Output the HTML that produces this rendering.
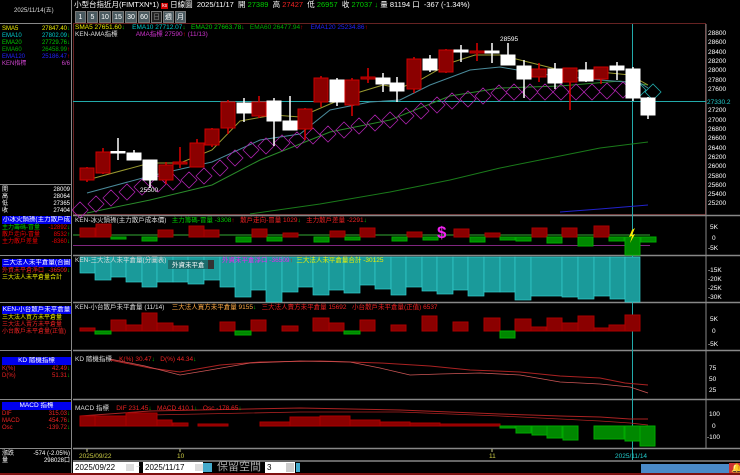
<!DOCTYPE html>
<html><head><meta charset="utf-8"><style>
*{margin:0;padding:0;box-sizing:border-box}
body{width:740px;height:475px;background:#000;overflow:hidden;position:relative;font-family:"Liberation Sans","Noto Sans CJK TC",sans-serif;font-size:7px;color:#fff}
.a{position:absolute;white-space:nowrap;line-height:8px}
.hb{position:absolute;left:2px;width:69px;height:8px;background:#0000ee;color:#fff;font-size:6.5px;line-height:8px;text-align:center;overflow:hidden}
.btn{position:absolute;top:11px;width:11px;height:12px;background:#4a5a60;color:#fff;font-size:7px;line-height:12px;text-align:center;border:1px solid #777}
.r{fill:#8b0000;stroke:#c00;stroke-width:1}
.w{fill:#fff;stroke:#fff}
.rv{fill:#fff;font-size:6.5px}
</style></head><body>
<!-- left panel -->
<div style="position:absolute;left:0;top:0;width:72px;height:475px;border-right:1px solid #888"></div>
<div style="position:absolute;left:0;top:23px;width:72px;height:1px;background:#888"></div>
<div class="a" style="left:14px;top:7px;font-size:6px;color:#ddd">2025/11/14(五)</div>
<div class="a" style="left:2px;top:25px;color:#ee0;font-size:6px">SMA5</div><div class="a" style="left:30px;top:25px;width:40px;text-align:right;color:#ee0;font-size:6px">27847.40<span style="color:#0c0">↓</span></div>
<div class="a" style="left:2px;top:32px;color:#0cc;font-size:6px">EMA10</div><div class="a" style="left:30px;top:32px;width:40px;text-align:right;color:#0cc;font-size:6px">27802.09<span style="color:#0c0">↓</span></div>
<div class="a" style="left:2px;top:39px;color:#0c0;font-size:6px">EMA20</div><div class="a" style="left:30px;top:39px;width:40px;text-align:right;color:#0c0;font-size:6px">27729.76<span style="color:#0c0">↓</span></div>
<div class="a" style="left:2px;top:46px;color:#0a0;font-size:6px">EMA60</div><div class="a" style="left:30px;top:46px;width:40px;text-align:right;color:#0a0;font-size:6px">26458.99<span style="color:#e00">↑</span></div>
<div class="a" style="left:2px;top:53px;color:#22f;font-size:6px">EMA120</div><div class="a" style="left:30px;top:53px;width:40px;text-align:right;color:#22f;font-size:6px">25186.47<span style="color:#e00">↑</span></div>
<div class="a" style="left:2px;top:60px;color:#c4c;font-size:6px">KEN指標</div><div class="a" style="left:30px;top:60px;width:40px;text-align:right;color:#c4c;font-size:6px">6/6</div>
<div style="position:absolute;left:0;top:184px;width:72px;height:1px;background:#888"></div>
<div class="a" style="left:2px;top:186px;font-size:6px">開</div><div class="a" style="left:40px;top:186px;width:30px;text-align:right;font-size:6px">28009</div>
<div class="a" style="left:2px;top:193px;font-size:6px">高</div><div class="a" style="left:40px;top:193px;width:30px;text-align:right;font-size:6px">28064</div>
<div class="a" style="left:2px;top:200px;font-size:6px">低</div><div class="a" style="left:40px;top:200px;width:30px;text-align:right;font-size:6px">27365</div>
<div class="a" style="left:2px;top:207px;font-size:6px">收</div><div class="a" style="left:40px;top:207px;width:30px;text-align:right;font-size:6px">27404</div>

<div class="hb" style="top:216px">小冰火鍋操(主力散戶成本</div>
<div class="a" style="left:2px;top:224px;color:#0c0;font-size:6px">主力籌碼-冒量</div><div class="a" style="left:40px;top:224px;width:30px;text-align:right;color:#e00;font-size:6px">-12892<span style="color:#0c0">↓</span></div>
<div class="a" style="left:2px;top:231px;color:#e00;font-size:6px">散戶走向-冒量</div><div class="a" style="left:40px;top:231px;width:30px;text-align:right;color:#e00;font-size:6px">8532<span style="color:#0c0">↑</span></div>
<div class="a" style="left:2px;top:238px;color:#e00;font-size:6px">主力散戶差量</div><div class="a" style="left:40px;top:238px;width:30px;text-align:right;color:#e00;font-size:6px">-8360<span style="color:#0c0">↓</span></div>
<div style="position:absolute;left:0;top:255px;width:72px;height:1px;background:#888"></div>
<div class="hb" style="top:259px">三大法人未平倉量(合圖表</div>
<div class="a" style="left:2px;top:267px;color:#e22;font-size:6px">外資未平倉淨口</div><div class="a" style="left:40px;top:267px;width:30px;text-align:right;color:#e22;font-size:6px">-36509<span style="color:#0c0">↓</span></div>
<div class="a" style="left:2px;top:274px;color:#ee0;font-size:6px">三大法人未平倉量合計</div>
<div style="position:absolute;left:0;top:302px;width:72px;height:1px;background:#888"></div>
<div class="hb" style="top:306px">KEN-小台散戶未平倉量</div>
<div class="a" style="left:2px;top:314px;color:#ee0;font-size:6px">三大法人買方未平倉量</div>
<div class="a" style="left:2px;top:321px;color:#e22;font-size:6px">三大法人賣方未平倉量</div>
<div class="a" style="left:2px;top:328px;color:#e22;font-size:6px">小台散戶未平倉量(正值)</div>
<div style="position:absolute;left:0;top:350px;width:72px;height:1px;background:#888"></div>
<div class="hb" style="top:357px">KD 隨機指標</div>
<div class="a" style="left:2px;top:365px;color:#e22;font-size:6px">K(%)</div><div class="a" style="left:40px;top:365px;width:30px;text-align:right;color:#e22;font-size:6px">42.49<span style="color:#0c0">↓</span></div>
<div class="a" style="left:2px;top:372px;color:#e22;font-size:6px">D(%)</div><div class="a" style="left:40px;top:372px;width:30px;text-align:right;color:#e22;font-size:6px">51.31<span style="color:#0c0">↓</span></div>
<div style="position:absolute;left:0;top:399px;width:72px;height:1px;background:#888"></div>
<div class="hb" style="top:402px">MACD 指標</div>
<div class="a" style="left:2px;top:410px;color:#e22;font-size:6px">DIF</div><div class="a" style="left:40px;top:410px;width:30px;text-align:right;color:#e22;font-size:6px">315.03<span style="color:#0c0">↓</span></div>
<div class="a" style="left:2px;top:417px;color:#e22;font-size:6px">MACD</div><div class="a" style="left:40px;top:417px;width:30px;text-align:right;color:#e22;font-size:6px">454.76<span style="color:#0c0">↓</span></div>
<div class="a" style="left:2px;top:424px;color:#e22;font-size:6px">Osc</div><div class="a" style="left:40px;top:424px;width:30px;text-align:right;color:#e22;font-size:6px">-139.72<span style="color:#0c0">↓</span></div>
<div style="position:absolute;left:0;top:448px;width:72px;height:1px;background:#888"></div>
<div class="a" style="left:2px;top:450px;font-size:6px">漲跌</div><div class="a" style="left:25px;top:450px;width:45px;text-align:right;font-size:6px">-574 (-2.05%)</div>
<div class="a" style="left:2px;top:457px;font-size:6px">量</div><div class="a" style="left:25px;top:457px;width:45px;text-align:right;font-size:6px">298028口</div>

<!-- top bar -->
<div class="a" style="left:74px;top:1px;font-size:7.5px">小型台指近月(FIMTXN*1) <span style="background:#c00;color:#fff;font-size:5px;padding:0 1px">ks</span> 日線圖&nbsp; 2025/11/17&nbsp; 開 <span style="color:#0c0">27389</span>&nbsp; 高 <span style="color:#e22">27427</span>&nbsp; 低 <span style="color:#0c0">26957</span>&nbsp; 收 <span style="color:#0c0">27037</span> <span style="color:#0c0">↓</span> 量 81194 口&nbsp; -367 (-1.34%)</div>
<div class="btn" style="left:75px">1</div><div class="btn" style="left:87px">5</div><div class="btn" style="left:99px;width:12px">10</div><div class="btn" style="left:112px;width:12px">15</div><div class="btn" style="left:125px;width:12px">30</div><div class="btn" style="left:138px;width:12px">60</div><div class="btn" style="left:151px;background:#222;color:#888">日</div><div class="btn" style="left:163px">週</div><div class="btn" style="left:175px">月</div>
<div class="a" style="left:75px;top:24px;font-size:6.5px"><span style="color:#ee0">SMA5 27651.60<span style="color:#0c0">↓</span></span>&nbsp;&nbsp;&nbsp; <span style="color:#0cc">EMA10 27712.07<span style="color:#0c0">↓</span></span>&nbsp;&nbsp; <span style="color:#0c0">EMA20 27663.78<span style="color:#0c0">↓</span></span>&nbsp;&nbsp; <span style="color:#0a0">EMA60 26477.94<span style="color:#e00">↑</span></span>&nbsp;&nbsp;&nbsp; <span style="color:#22f">EMA120 25234.86<span style="color:#e00">↑</span></span></div>
<div class="a" style="left:75px;top:31px;font-size:6.5px;color:#ddd">KEN-AMA指標&nbsp;&nbsp;&nbsp;&nbsp;&nbsp;&nbsp;&nbsp;&nbsp;&nbsp; <span style="color:#c3c">AMA指標 27590<span style="color:#e00">↑</span> (11/13)</span></div>

<svg width="740" height="475" style="position:absolute;left:0;top:0" xmlns="http://www.w3.org/2000/svg">
<!-- frames -->
<rect x="73.5" y="23.5" width="632" height="191" fill="none" stroke="#622"/>
<g stroke="#888" stroke-width="1.5">
<line x1="73" y1="215.5" x2="740" y2="215.5"/><line x1="73" y1="255.5" x2="740" y2="255.5"/><line x1="73" y1="302.5" x2="740" y2="302.5"/><line x1="73" y1="350.5" x2="740" y2="350.5"/><line x1="73" y1="399.5" x2="740" y2="399.5"/><line x1="73" y1="448.5" x2="740" y2="448.5"/>
</g>
<line x1="706" y1="24" x2="706" y2="448" stroke="#888"/>
<!-- crosshair -->
<line x1="632.5" y1="24" x2="632.5" y2="460" stroke="#2aa"/>
<line x1="73" y1="101.5" x2="706" y2="101.5" stroke="#2aa"/>
<!-- price axis -->
<g class="rv" font-size="6.5">
<text x="708" y="35">28800</text><text x="708" y="44">28600</text><text x="708" y="54">28400</text><text x="708" y="63">28200</text><text x="708" y="72">28000</text><text x="708" y="82">27800</text><text x="708" y="91">27600</text><text x="708" y="112">27200</text><text x="708" y="122">27000</text><text x="708" y="131">26800</text><text x="708" y="140">26600</text><text x="708" y="150">26400</text><text x="708" y="159">26200</text><text x="708" y="168">26000</text><text x="708" y="178">25800</text><text x="708" y="187">25600</text><text x="708" y="196">25400</text><text x="708" y="205">25200</text>
<text x="707" y="104" fill="#2cc">27330.2</text>
</g>
<!-- MA lines -->
<polyline fill="none" stroke="#22c" points="560,212 600,209 648,205"/>
<polyline fill="none" stroke="#1a7a1a" points="250,214 320,204 390,192 450,180 500,168 560,156 600,148 648,142"/>
<polyline fill="none" stroke="#2a8a2a" points="87,213 150,200 212,185 260,160 330,132 390,120 450,96 500,88 560,86 620,81 648,85"/>
<polyline fill="none" stroke="#4a8a9a" points="87,193 150,176 212,162 260,140 300,134 330,110 370,102 400,100 430,85 470,70 500,67 540,74 600,80 640,83 648,88"/>
<polyline fill="none" stroke="#9a9a30" points="87,180 150,163 180,163 212,150 240,121 274,115 300,117 330,104 360,92 383,85 400,88 420,80 450,63 475,55 500,55 520,60 560,70 600,72 630,75 648,85"/>
<!-- AMA diamonds -->
<g fill="none" stroke="#a2a" stroke-width="0.8">
<path d="M72 210l8-8 8 8-8 8zM88 204l8-8 8 8-8 8zM103 198l8-8 8 8-8 8zM119 192l8-8 8 8-8 8zM134 187l8-8 8 8-8 8zM150 184l8-8 8 8-8 8zM165 182l8-8 8 8-8 8zM181 180l8-8 8 8-8 8zM196 176l8-8 8 8-8 8zM212 168l8-8 8 8-8 8zM227 158l8-8 8 8-8 8zM243 150l8-8 8 8-8 8zM258 146l8-8 8 8-8 8zM274 143l8-8 8 8-8 8zM289 140l8-8 8 8-8 8zM305 136l8-8 8 8-8 8zM320 134l8-8 8 8-8 8zM336 130l8-8 8 8-8 8zM351 126l8-8 8 8-8 8zM367 123l8-8 8 8-8 8zM382 120l8-8 8 8-8 8zM398 116l8-8 8 8-8 8zM413 111l8-8 8 8-8 8zM429 105l8-8 8 8-8 8zM444 101l8-8 8 8-8 8zM460 99l8-8 8 8-8 8zM475 96l8-8 8 8-8 8zM491 93l8-8 8 8-8 8zM506 92l8-8 8 8-8 8zM522 92l8-8 8 8-8 8zM537 92l8-8 8 8-8 8zM553 92l8-8 8 8-8 8zM568 92l8-8 8 8-8 8zM584 92l8-8 8 8-8 8zM599 91l8-8 8 8-8 8zM615 90l8-8 8 8-8 8z"/>
<path stroke="#2aa" d="M630 90l8-8 8 8-8 8zM645 92l8-8 8 8-8 8z"/>
</g>
<!-- candles -->
<g stroke-width="1.5">
<g stroke="#d00"><line x1="87" y1="167" x2="87" y2="182"/><line x1="103" y1="148" x2="103" y2="174"/><line x1="166" y1="162" x2="166" y2="184"/><line x1="180" y1="147" x2="180" y2="168"/><line x1="197" y1="139" x2="197" y2="167"/><line x1="212" y1="128" x2="212" y2="147"/><line x1="228" y1="100" x2="228" y2="134"/><line x1="259" y1="96" x2="259" y2="118"/><line x1="305" y1="108" x2="305" y2="140"/><line x1="321" y1="76" x2="321" y2="107"/><line x1="352" y1="78" x2="352" y2="116"/><line x1="368" y1="68" x2="368" y2="83"/><line x1="414" y1="57" x2="414" y2="93"/><line x1="446" y1="49" x2="446" y2="73"/><line x1="477" y1="43" x2="477" y2="61"/><line x1="539" y1="63" x2="539" y2="82"/><line x1="570" y1="68" x2="570" y2="110"/><line x1="601" y1="67" x2="601" y2="84"/></g>
<g stroke="#fff"><line x1="118" y1="138" x2="118" y2="160"/><line x1="134" y1="150" x2="134" y2="160"/><line x1="150" y1="160" x2="150" y2="188"/><line x1="244" y1="98" x2="244" y2="122"/><line x1="274" y1="98" x2="274" y2="146"/><line x1="290" y1="96" x2="290" y2="130"/><line x1="337" y1="78" x2="337" y2="106"/><line x1="383" y1="73" x2="383" y2="92"/><line x1="397" y1="77" x2="397" y2="102"/><line x1="430" y1="55" x2="430" y2="72"/><line x1="461" y1="45" x2="461" y2="62"/><line x1="492" y1="43" x2="492" y2="63"/><line x1="508" y1="43" x2="508" y2="65"/><line x1="524" y1="60" x2="524" y2="98"/><line x1="555" y1="63" x2="555" y2="89"/><line x1="586" y1="62" x2="586" y2="82"/><line x1="617" y1="62" x2="617" y2="80"/><line x1="633" y1="67" x2="633" y2="101"/><line x1="648" y1="97" x2="648" y2="119"/></g>
</g>
<g>
<rect class="r" x="80" y="168" width="14" height="12"/><rect class="r" x="96" y="152" width="14" height="21"/><rect class="w" x="111" y="151.5" width="14" height="1.5"/><rect class="w" x="127" y="153" width="14" height="7"/><rect class="w" x="143" y="160" width="14" height="20"/><rect class="r" x="159" y="165" width="14" height="15"/><rect class="r" x="173" y="162" width="14" height="2"/><rect class="r" x="190" y="143" width="14" height="24"/><rect class="r" x="205" y="129" width="14" height="16"/><rect class="r" x="221" y="102" width="14" height="26"/><rect class="w" x="237" y="103" width="14" height="10"/><rect class="r" x="252" y="102" width="14" height="14"/><rect class="w" x="267" y="101" width="14" height="20"/><rect class="w" x="283" y="121" width="14" height="9"/><rect class="r" x="298" y="109" width="14" height="20"/><rect class="r" x="314" y="78" width="14" height="24"/><rect class="w" x="330" y="80" width="14" height="22"/><rect class="r" x="345" y="80" width="14" height="25"/><rect class="r" x="361" y="77" width="14" height="2"/><rect class="w" x="376" y="78" width="14" height="6"/><rect class="w" x="390" y="83" width="14" height="8"/><rect class="r" x="407" y="59" width="14" height="30"/><rect class="w" x="423" y="59" width="14" height="11"/><rect class="r" x="439" y="50" width="14" height="22"/><rect class="w" x="454" y="50" width="14" height="2"/><rect class="r" x="470" y="51" width="14" height="2"/><rect class="w" x="485" y="51" width="14" height="2"/><rect class="w" x="501" y="55" width="14" height="10"/><rect class="w" x="517" y="66" width="14" height="13"/><rect class="r" x="532" y="69" width="14" height="8"/><rect class="w" x="548" y="69" width="14" height="14"/><rect class="r" x="563" y="68" width="14" height="14"/><rect class="w" x="579" y="70" width="14" height="11"/><rect class="r" x="594" y="67" width="14" height="12"/><rect class="w" x="610" y="66" width="14" height="4"/><rect class="w" x="626" y="69" width="14" height="29"/><rect class="w" x="641" y="98" width="14" height="17"/>
</g>
<text x="140" y="192" class="rv">25500</text><text x="500" y="41" class="rv">28595</text>

<!-- panel 2 -->
<line x1="73" y1="235" x2="650" y2="235" stroke="#3a3"/>
<line x1="73" y1="245.5" x2="650" y2="245.5" stroke="#a3a" stroke-width="0.7"/>
<g fill="#8b0000" stroke="#a00">
<rect x="80" y="228" width="15" height="9"/><rect x="96" y="224" width="15" height="13"/><rect x="158" y="230" width="15" height="7"/><rect x="189" y="226" width="15" height="11"/><rect x="204" y="230" width="15" height="7"/><rect x="252" y="229" width="15" height="8"/><rect x="283" y="233" width="15" height="4"/><rect x="330" y="231" width="15" height="6"/><rect x="360" y="228" width="15" height="9"/><rect x="407" y="232" width="15" height="5"/><rect x="454" y="229" width="15" height="8"/><rect x="485" y="233" width="15" height="4"/><rect x="532" y="228" width="15" height="9"/><rect x="562" y="228" width="15" height="9"/><rect x="594" y="226" width="15" height="11"/>
</g>
<g fill="#080" stroke="#0a0">
<rect x="111" y="237" width="15" height="2"/><rect x="142" y="237" width="15" height="4"/><rect x="236" y="237" width="15" height="5"/><rect x="267" y="237" width="15" height="4"/><rect x="314" y="237" width="15" height="5"/><rect x="345" y="237" width="15" height="3"/><rect x="392" y="237" width="15" height="4"/><rect x="423" y="237" width="15" height="3"/><rect x="470" y="237" width="15" height="5"/><rect x="500" y="237" width="15" height="3"/><rect x="516" y="237" width="15" height="4"/><rect x="547" y="237" width="15" height="6"/><rect x="578" y="237" width="15" height="9"/><rect x="609" y="237" width="15" height="4"/><rect x="625" y="237" width="15" height="18"/><rect x="641" y="237" width="15" height="5"/>
</g>
<text x="437" y="238" fill="#e2e" font-size="17" font-weight="bold">$</text>
<path d="M632 230l3-2-3 7 3-1-5 9 2-7-3 1z" fill="#fe0"/>
<g class="rv"><text x="710" y="229">5K</text><text x="712" y="240">0</text><text x="708" y="250">-5K</text></g>
<text x="75" y="222" font-size="6.5"><tspan fill="#ddd">KEN-冰火鍋操(主力散戶成本價)</tspan>&#160;&#160; <tspan fill="#0c0">主力籌碼-冒量 -3308</tspan><tspan fill="#e00">↑</tspan>&#160;&#160; <tspan fill="#e22">散戶走向-冒量 1029</tspan><tspan fill="#0c0">↓</tspan>&#160;&#160; <tspan fill="#e22">主力散戶差量 -2291</tspan><tspan fill="#0c0">↓</tspan></text>

<!-- panel 3 teal -->
<g fill="#1a9a9a" stroke="#3cc" stroke-width="0.7">
<rect x="80" y="257" width="15" height="16"/><rect x="95" y="257" width="16" height="23"/><rect x="111" y="257" width="15" height="20"/><rect x="126" y="257" width="16" height="25"/><rect x="142" y="257" width="15" height="30"/><rect x="157" y="257" width="16" height="25"/><rect x="173" y="257" width="15" height="25"/><rect x="188" y="257" width="16" height="27"/><rect x="204" y="257" width="16" height="23"/><rect x="220" y="257" width="15" height="30"/><rect x="235" y="257" width="16" height="40"/><rect x="251" y="257" width="15" height="33"/><rect x="266" y="257" width="16" height="45"/><rect x="282" y="257" width="16" height="35"/><rect x="298" y="257" width="15" height="30"/><rect x="313" y="257" width="16" height="38"/><rect x="329" y="257" width="15" height="33"/><rect x="344" y="257" width="16" height="36"/><rect x="360" y="257" width="15" height="28"/><rect x="375" y="257" width="16" height="32"/><rect x="391" y="257" width="15" height="38"/><rect x="406" y="257" width="16" height="30"/><rect x="422" y="257" width="15" height="34"/><rect x="437" y="257" width="16" height="37"/><rect x="453" y="257" width="15" height="33"/><rect x="468" y="257" width="16" height="39"/><rect x="484" y="257" width="16" height="35"/><rect x="500" y="257" width="15" height="35"/><rect x="515" y="257" width="16" height="43"/><rect x="531" y="257" width="31" height="39"/><rect x="562" y="257" width="16" height="40"/><rect x="578" y="257" width="16" height="42"/><rect x="594" y="257" width="16" height="39"/><rect x="610" y="257" width="15" height="42"/><rect x="625" y="257" width="15" height="45"/>
</g>
<rect x="168" y="260" width="43" height="9" fill="#1c6c6c"/><rect x="208" y="260" width="6" height="9" fill="#333"/>
<text x="172" y="267" font-size="6.5" fill="#fff">外資未平倉</text>
<text x="75" y="262" font-size="6.5"><tspan fill="#ddd">KEN-三大法人未平倉量(分圖表)</tspan></text>
<text x="222" y="262" font-size="6.5"><tspan fill="#e2e">外資未平倉淨口 -36509</tspan><tspan fill="#e00">↑</tspan>&#160; <tspan fill="#ee0">三大法人未平倉量合計 -30125</tspan></text>
<g class="rv"><text x="708" y="272">-15K</text><text x="708" y="281">-20K</text><text x="708" y="290">-25K</text><text x="708" y="299">-30K</text></g>

<!-- panel 4 -->
<g fill="#8b0000" stroke="#a00">
<rect x="80" y="328" width="15" height="3"/><rect x="111" y="320" width="15" height="11"/><rect x="126" y="325" width="16" height="6"/><rect x="142" y="313" width="15" height="18"/><rect x="157" y="323" width="16" height="8"/><rect x="173" y="326" width="15" height="5"/><rect x="220" y="322" width="15" height="9"/><rect x="251" y="320" width="15" height="11"/><rect x="282" y="326" width="16" height="5"/><rect x="313" y="318" width="16" height="13"/><rect x="329" y="323" width="15" height="8"/><rect x="360" y="320" width="15" height="11"/><rect x="391" y="325" width="15" height="6"/><rect x="422" y="316" width="15" height="15"/><rect x="453" y="322" width="15" height="9"/><rect x="484" y="318" width="16" height="13"/><rect x="515" y="319" width="16" height="12"/><rect x="531" y="327" width="15" height="4"/><rect x="547" y="318" width="15" height="13"/><rect x="562" y="323" width="16" height="8"/><rect x="578" y="316" width="16" height="15"/><rect x="594" y="328" width="15" height="3"/><rect x="609" y="325" width="16" height="6"/><rect x="625" y="315" width="15" height="16"/>
</g>
<g fill="#080" stroke="#0a0"><rect x="95" y="331" width="16" height="3"/><rect x="235" y="331" width="16" height="4"/><rect x="344" y="331" width="16" height="3"/><rect x="500" y="331" width="15" height="7"/></g>
<text x="75" y="309" font-size="6.5"><tspan fill="#ddd">KEN-小台散戶未平倉量 (11/14)</tspan>&#160;&#160;&#160; <tspan fill="#fa4">三大法人買方未平倉量 9155</tspan><tspan fill="#0c0">↓</tspan>&#160;&#160; <tspan fill="#e22">三大法人賣方未平倉量 15692</tspan>&#160;&#160; <tspan fill="#e22">小台散戶未平倉量(正值) 6537</tspan></text>
<g class="rv"><text x="710" y="321">5K</text><text x="712" y="333">0</text><text x="708" y="346">-5K</text></g>

<!-- KD -->
<polyline fill="none" stroke="#a22" points="110,360 150,368 180,372 220,365 260,362 320,361 380,363 430,366 470,370 520,372 560,376 600,378 625,383 648,385"/>
<polyline fill="none" stroke="#c55" stroke-width="0.8" points="110,359 145,366 180,375 210,370 250,363 300,361 350,362 380,368 410,375 440,374 480,373 520,375 560,382 600,384 630,387 648,393"/>
<text x="75" y="361" font-size="6.5"><tspan fill="#ddd">KD 隨機指標</tspan>&#160;&#160;&#160; <tspan fill="#e22">K(%) 30.47</tspan><tspan fill="#0c0">↓</tspan>&#160;&#160; <tspan fill="#e22">D(%) 44.34</tspan><tspan fill="#0c0">↓</tspan></text>
<g class="rv"><text x="709" y="370">75</text><text x="709" y="381">50</text><text x="709" y="392">25</text></g>

<!-- MACD -->
<polyline fill="none" stroke="#a22" points="80,416 150,411 200,410 300,408 400,410 500,414 560,416 600,417 630,419 648,419"/>
<polyline fill="none" stroke="#a22" stroke-width="0.8" points="80,419 150,415 200,414 300,412 400,412 500,416 560,419 600,421 630,423 648,425"/>
<g fill="#8b0000" stroke="#a00"><rect x="80" y="416" width="15" height="10"/><rect x="95" y="416" width="31" height="10"/><rect x="126" y="413" width="31" height="13"/><rect x="157" y="420" width="15" height="6"/><rect x="173" y="423" width="15" height="3"/><rect x="198" y="424" width="30" height="2"/><rect x="260" y="422" width="30" height="4"/><rect x="290" y="417" width="30" height="9"/><rect x="320" y="416" width="30" height="10"/><rect x="350" y="420" width="30" height="6"/><rect x="380" y="422" width="30" height="4"/><rect x="410" y="423" width="30" height="3"/><rect x="440" y="424" width="60" height="2"/></g>
<g fill="#080" stroke="#0a0"><rect x="500" y="426" width="15" height="2"/><rect x="516" y="426" width="15" height="7"/><rect x="532" y="426" width="15" height="9"/><rect x="547" y="426" width="15" height="12"/><rect x="563" y="426" width="15" height="14"/><rect x="594" y="426" width="30" height="13"/><rect x="625" y="426" width="15" height="15"/><rect x="640" y="426" width="15" height="20"/></g>
<text x="75" y="410" font-size="6.5"><tspan fill="#ddd">MACD 指標</tspan>&#160;&#160;&#160; <tspan fill="#e22">DIF 231.45</tspan><tspan fill="#0c0">↓</tspan>&#160;&#160; <tspan fill="#e22">MACD 410.1</tspan><tspan fill="#0c0">↓</tspan>&#160;&#160; <tspan fill="#e22">Osc -178.65</tspan><tspan fill="#0c0">↓</tspan></text>
<g class="rv"><text x="709" y="416">100</text><text x="712" y="428">0</text><text x="707" y="439">-100</text></g>

<!-- x axis -->
<g stroke="#cc8"><line x1="87" y1="449" x2="87" y2="452"/><line x1="180" y1="449" x2="180" y2="452"/><line x1="492" y1="449" x2="492" y2="452"/></g>
<text x="79" y="458" fill="#cc4" font-size="6.5">2025/09/22</text><text x="177" y="458" fill="#cc4" font-size="6.5">10</text><text x="489" y="458" fill="#cc4" font-size="6.5">11</text><text x="615" y="458" fill="#2cc" font-size="6.5">2025/11/14</text>
</svg>

<!-- bottom bar -->
<div style="position:absolute;left:73px;top:460px;width:667px;height:1.5px;background:#666"></div>
<div style="position:absolute;left:73px;top:462px;width:66px;height:11px;background:#fff;color:#000;font-size:8px;line-height:11px;padding-left:2px">2025/09/22</div>
<div style="position:absolute;left:126px;top:464px;width:8px;height:7px;background:#ddd"></div>
<div class="a" style="left:136px;top:464px;color:#ccc">~</div>
<div style="position:absolute;left:143px;top:462px;width:60px;height:11px;background:#fff;color:#000;font-size:8px;line-height:11px;padding-left:2px">2025/11/17</div>
<div style="position:absolute;left:195px;top:464px;width:8px;height:7px;background:#ddd"></div>
<div style="position:absolute;left:203px;top:463px;width:9px;height:9px;background:#4ac"></div>
<div class="a" style="left:217px;top:461px;font-size:11px;line-height:13px;color:#aaa">保留空間</div>
<div style="position:absolute;left:265px;top:462px;width:30px;height:11px;background:#fff;color:#000;font-size:8px;line-height:11px;padding-left:2px">3</div>
<div style="position:absolute;left:286px;top:463px;width:8px;height:9px;background:#ccc"></div>
<div style="position:absolute;left:296px;top:463px;width:4px;height:9px;background:#4ac"></div>
<div style="position:absolute;left:641px;top:464px;width:88px;height:10px;background:#4a8ac8"></div>
<div style="position:absolute;left:729px;top:463px;width:11px;height:11px;background:#c33"></div>
<div class="a" style="left:731px;top:464px;color:#fc4;font-size:9px">🔔</div>
<div style="position:absolute;left:0;top:473px;width:740px;height:2px;background:#801010"></div>
</body></html>
